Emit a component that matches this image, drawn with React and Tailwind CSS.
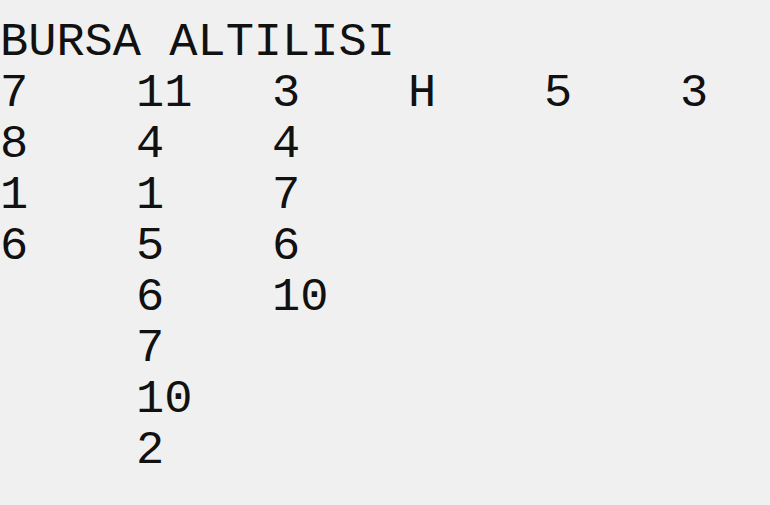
import React from 'react';

const columns = [
    ['7', '8', '1', '6'],
    ['11', '4', '1', '5', '6', '7', '10', '2'],
    ['3', '4', '7', '6', '10'],
    ['H'],
    ['5'],
    ['3'],
];

function App() {
    return (
        <div
            className="w-[770px] h-[505px] overflow-hidden bg-[#f0f0f0] text-[#111] pt-[17px] text-[47px] leading-[51px] whitespace-pre"
            style={{ fontFamily: '"Liberation Mono", "Courier New", monospace' }}
        >
            <div>BURSA ALTILISI</div>
            <div className="flex">
                {columns.map((col, i) => (
                    <div key={i} className="w-[136px] shrink-0 flex flex-col">
                        {col.map((v, j) => (
                            <div key={j}>{v}</div>
                        ))}
                    </div>
                ))}
            </div>
        </div>
    );
}

export default App;
